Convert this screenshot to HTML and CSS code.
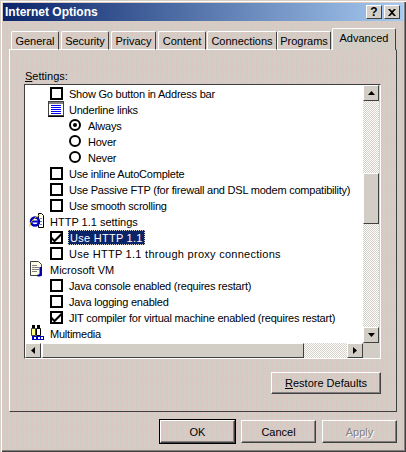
FILE: index.html
```html
<!DOCTYPE html>
<html lang="en">

<head>
  <meta charset="UTF-8">
  <meta name="viewport" content="width=device-width, initial-scale=1.0">
  <title>Internet Options</title>
  <link rel="stylesheet" href="styles.css">
</head>

<body>
  <div class="window">
    <div class="titlebar">
      <span class="title-text">Internet Options</span>
      <span class="title-btn title-help">?</span>
      <span class="title-btn title-close">
        <svg width="8" height="7" viewBox="0 0 8 7"><path d="M0 0h2l2 2 2-2h2L5 3.5 8 7H6L4 5 2 7H0l3-3.5z" fill="#000"/></svg>
      </span>
    </div>

    <div class="tabs">
      <span class="tab tab-general">General</span>
      <span class="tab tab-security">Security</span>
      <span class="tab tab-privacy">Privacy</span>
      <span class="tab tab-content">Content</span>
      <span class="tab tab-connections">Connections</span>
      <span class="tab tab-programs">Programs</span>
      <span class="tab tab-active">Advanced</span>
    </div>

    <div class="panel">
      <div class="settings-label"><u>S</u>ettings:</div>

      <div class="list">
        <div class="list-main">
          <div class="rows">
            <div class="row row-option"><span class="check"></span><span class="row-text">Show Go button in Address bar</span></div>
            <div class="row row-sub">
              <svg class="row-icon" width="16" height="16" viewBox="0 0 16 16">
                <rect x="0.5" y="0.5" width="15" height="14" fill="#fff" stroke="#404040"/>
                <rect x="1" y="1" width="14" height="2" fill="#808080"/>
                <path d="M3 4.5h10M3 6.5h10M3 8.5h10M3 10.5h10M3 12.5h10" stroke="#0000ff"/>
                <path d="M0 15.5h16" stroke="#000"/>
              </svg>
              <span class="row-text">Underline links</span>
            </div>
            <div class="row row-radio"><span class="radio radio-on"></span><span class="row-text">Always</span></div>
            <div class="row row-radio"><span class="radio"></span><span class="row-text">Hover</span></div>
            <div class="row row-radio"><span class="radio"></span><span class="row-text">Never</span></div>
            <div class="row row-option"><span class="check"></span><span class="row-text">Use inline AutoComplete</span></div>
            <div class="row row-option"><span class="check"></span><span class="row-text">Use Passive FTP (for firewall and DSL modem compatibility)</span></div>
            <div class="row row-option"><span class="check"></span><span class="row-text">Use smooth scrolling</span></div>
            <div class="row row-group">
              <svg class="row-icon" width="16" height="16" viewBox="0 0 16 16">
                <path d="M9.5 0.5h3l2 2v12h-5z" fill="#fff" stroke="#000"/>
                <path d="M11 5.5h2M11 8.5h2M11 11.5h2" stroke="#808080"/>
                <circle cx="6" cy="8.5" r="4" fill="#fff" stroke="#0000c0" stroke-width="2.5"/>
                <path d="M3 8.5h6" stroke="#0000c0" stroke-width="2"/>
                <path d="M1 13.5C0 10 6 4 11 2" fill="none" stroke="#e0c000"/>
              </svg>
              <span class="row-text row-text-plain">HTTP 1.1 settings</span>
            </div>
            <div class="row row-option"><span class="check check-on"><svg width="9" height="9" viewBox="0 0 9 9"><path d="M0 4l2.5 2.5L9 0v3L2.5 9.5 0 7z" fill="#000"/></svg></span><span class="row-text row-text-wide row-selected">Use HTTP 1.1</span></div>
            <div class="row row-option"><span class="check"></span><span class="row-text row-text-wide">Use HTTP 1.1 through proxy connections</span></div>
            <div class="row row-group">
              <svg class="row-icon" width="16" height="16" viewBox="0 0 16 16">
                <path d="M1.5 0.5h8l3 3v11h-11z" fill="#ffffe8" stroke="#404040"/>
                <path d="M3 4.5h5M3 6.5h7M3 8.5h7M3 10.5h5" stroke="#808080"/>
                <path d="M13 6v7.5q0 2-2.500 2H8.500v-2h1q1 0 1-1V6z" fill="#0000a0"/>
              </svg>
              <span class="row-text row-text-plain">Microsoft VM</span>
            </div>
            <div class="row row-option"><span class="check"></span><span class="row-text">Java console enabled (requires restart)</span></div>
            <div class="row row-option"><span class="check"></span><span class="row-text">Java logging enabled</span></div>
            <div class="row row-option"><span class="check check-on"><svg width="9" height="9" viewBox="0 0 9 9"><path d="M0 4l2.5 2.5L9 0v3L2.5 9.5 0 7z" fill="#000"/></svg></span><span class="row-text">JIT compiler for virtual machine enabled (requires restart)</span></div>
            <div class="row row-group">
              <svg class="row-icon" width="16" height="16" viewBox="0 0 16 16">
                <path d="M3 0h3v3H3zM8 0h3v3H8z" fill="#000"/>
                <path d="M2.5 3.5h4v7h-4z" fill="#ffff80" stroke="#404040"/>
                <path d="M7.5 3.5h4v7h-4z" fill="#fff" stroke="#000"/>
                <path d="M3 11h12v4H3z" fill="#0000c0"/>
                <path d="M5 12h2v2H5zM9 12h2v2H9zM12 12h2v2h-2z" fill="#fff"/>
              </svg>
              <span class="row-text">Multimedia</span>
            </div>
          </div>
          <div class="vscroll">
            <span class="sb-btn"><svg width="7" height="4" viewBox="0 0 7 4"><path d="M3.5 0L7 4H0z" fill="#000"/></svg></span>
            <span class="vtrack vtrack-top"></span>
            <span class="vthumb"></span>
            <span class="vtrack vtrack-bottom"></span>
            <span class="sb-btn"><svg width="7" height="4" viewBox="0 0 7 4"><path d="M0 0h7L3.5 4z" fill="#000"/></svg></span>
          </div>
        </div>
        <div class="hscroll">
          <span class="sb-btn sb-btn-h"><svg width="4" height="7" viewBox="0 0 4 7"><path d="M4 0v7L0 3.5z" fill="#000"/></svg></span>
          <span class="hthumb"></span>
          <span class="htrack"></span>
          <span class="sb-btn sb-btn-h"><svg width="4" height="7" viewBox="0 0 4 7"><path d="M0 0l4 3.5L0 7z" fill="#000"/></svg></span>
          <span class="sb-corner"></span>
        </div>
      </div>

      <div class="panel-actions">
        <span class="btn btn-restore"><u>R</u>estore Defaults</span>
      </div>
    </div>

    <div class="dialog-actions">
      <span class="btn btn-default">OK</span>
      <span class="btn">Cancel</span>
      <span class="btn btn-disabled">Apply</span>
    </div>
  </div>
</body>

</html>
```

FILE: styles.css
```css
html,
body {
  margin: 0;
  padding: 0;
}

body {
  width: 406px;
  height: 452px;
  overflow: hidden;
  font-family: "Liberation Sans", sans-serif;
  font-size: 11px;
  color: #000;
}

/* dithered 256 colour grey of the original capture */
.window {
  box-sizing: border-box;
  width: 406px;
  height: 452px;
  padding: 3px 0 0;
  background-color: #d2cec6;
  background-image:
    radial-gradient(circle at 1px 1px, rgba(255, 255, 240, 0.6) 0.5px, transparent 0.7px),
    radial-gradient(circle at 2px 2px, rgba(235, 190, 190, 0.6) 0.7px, transparent 0.9px),
    radial-gradient(circle at 3px 1px, rgba(190, 220, 190, 0.6) 0.5px, transparent 0.7px),
    radial-gradient(circle at 2px 3px, rgba(255, 255, 255, 0.5) 0.5px, transparent 0.7px);
  background-size: 7px 5px, 5px 3px, 11px 7px, 13px 11px;
  box-shadow: inset 1px 1px 0 #d4d0c8, inset 2px 2px 0 #fff, inset -1px -1px 0 #404040, inset -2px -2px 0 #808080;
}

.titlebar {
  display: flex;
  align-items: center;
  height: 18px;
  margin: 0 3px;
  padding: 0 3px 0 2px;
  background: linear-gradient(to right, #0a246a, #a6caf0);
}

.title-text {
  flex: 1;
  color: #fff;
  font-weight: bold;
  font-size: 12px;
}

.title-btn {
  display: flex;
  align-items: center;
  justify-content: center;
  box-sizing: border-box;
  width: 16px;
  height: 14px;
  background-color: #d4d0c8;
  border: 1px solid;
  border-color: #fff #404040 #404040 #fff;
  font-weight: bold;
  font-size: 12px;
}

.title-help {
  margin-right: 2px;
}

.tabs {
  display: flex;
  align-items: flex-end;
  height: 28px;
  margin-left: 11px;
  position: relative;
  z-index: 1;
}

.tab {
  box-sizing: border-box;
  height: 19px;
  margin-bottom: -1px;
  padding-top: 3px;
  text-align: center;
  border: 1px solid;
  border-color: #fff #404040 #fff #fff;
  border-radius: 2px 2px 0 0;
}

.tab-general { width: 48px; margin-right: 2px; }
.tab-security { width: 48px; margin-right: 2px; }
.tab-privacy { width: 45px; margin-right: 2px; }
.tab-content { width: 48px; margin-right: 1px; }
.tab-connections { width: 70px; }
.tab-programs { width: 54px; margin-right: 1px; }

.tab-active {
  width: 64px;
  height: 22px;
  padding-top: 3px;
  border-bottom: none;
  background-color: #d2cec6;
}

.panel {
  box-sizing: border-box;
  width: 388px;
  height: 363px;
  margin-left: 9px;
  padding: 19px 0 0 14px;
  border: 1px solid;
  border-color: #fff #404040 #404040 #fff;
}

.settings-label {
  height: 15px;
  line-height: 14px;
  padding-left: 1px;
}

.list {
  box-sizing: border-box;
  width: 357px;
  height: 275px;
  border: 1px solid;
  border-color: #404040 #fff #fff #404040;
  background-color: #fff;
  box-shadow: inset -1px -1px 0 #d4d0c8;
}

.list-main {
  display: flex;
  height: 258px;
}

.rows {
  width: 338px;
  height: 258px;
  overflow: hidden;
}

.row {
  display: flex;
  align-items: center;
  height: 16px;
  white-space: nowrap;
}

/* Liberation runs wider than the dialog font on lower case, narrower on caps */
.row-text {
  padding-top: 1px;
  letter-spacing: -0.22px;
}

.row-text-plain { letter-spacing: 0; }
.row-text-wide { letter-spacing: 0.27px; }

.row-group { padding-left: 4px; }
.row-sub { padding-left: 23px; }
.row-option { padding-left: 25px; }
.row-radio { padding-left: 44px; }

.row-icon {
  flex: none;
  margin-right: 5px;
}

.check {
  display: flex;
  align-items: center;
  justify-content: center;
  flex: none;
  box-sizing: border-box;
  width: 13px;
  height: 13px;
  margin-right: 6px;
  border: 2px solid #000;
  background-color: #fff;
}

.radio {
  flex: none;
  box-sizing: border-box;
  position: relative;
  width: 12px;
  height: 12px;
  margin-right: 7px;
  border: 2px solid #000;
  border-radius: 50%;
  background-color: #fff;
}

.radio-on::after {
  content: "";
  position: absolute;
  left: 2px;
  top: 2px;
  width: 4px;
  height: 4px;
  border-radius: 50%;
  background-color: #000;
}

.row-selected {
  margin-left: -1px;
  padding: 1px 2px 0;
  line-height: 14px;
  color: #fff;
  background-color: #0a246a;
  outline: 1px dotted #d4d0c8;
  outline-offset: -1px;
}

.vscroll {
  display: flex;
  flex-direction: column;
  width: 16px;
}

.sb-btn {
  display: flex;
  align-items: center;
  justify-content: center;
  flex: none;
  box-sizing: border-box;
  width: 16px;
  height: 16px;
  background-color: #d2cec6;
  border: 1px solid;
  border-color: #fff #404040 #404040 #fff;
}

.sb-btn-h {
  height: 15px;
}

.vtrack,
.htrack {
  background-color: #fff;
  background-image: conic-gradient(#d4d0c8 25%, #fff 0 50%, #d4d0c8 0 75%, #fff 0);
  background-size: 2px 2px;
}

.vtrack-top { height: 72px; }
.vtrack-bottom { flex: 1; }

.vthumb {
  box-sizing: border-box;
  height: 51px;
  background-color: #d2cec6;
  border: 1px solid;
  border-color: #fff #404040 #404040 #fff;
}

.hscroll {
  display: flex;
  height: 15px;
}

.hthumb {
  box-sizing: border-box;
  width: 262px;
  margin-left: 1px;
  background-color: #d2cec6;
  border: 1px solid;
  border-color: #fff #404040 #404040 #fff;
}

.htrack {
  width: 43px;
}

.sb-corner {
  width: 16px;
  background-color: #d2cec6;
}

.panel-actions {
  display: flex;
  justify-content: flex-end;
  width: 357px;
  margin-top: 13px;
}

.btn {
  display: flex;
  align-items: center;
  justify-content: center;
  box-sizing: border-box;
  width: 75px;
  height: 23px;
  border: 1px solid;
  border-color: #fff #404040 #404040 #fff;
  box-shadow: inset -1px -1px 0 #808080;
}

.btn-restore {
  width: 110px;
  height: 22px;
}

.btn-default {
  outline: 1px solid #000;
  outline-offset: 0;
}

.btn-disabled {
  color: #808080;
  text-shadow: 1px 1px 0 #fff;
}

.dialog-actions {
  display: flex;
  gap: 6px;
  margin: 8px 0 0 160px;
}
```
